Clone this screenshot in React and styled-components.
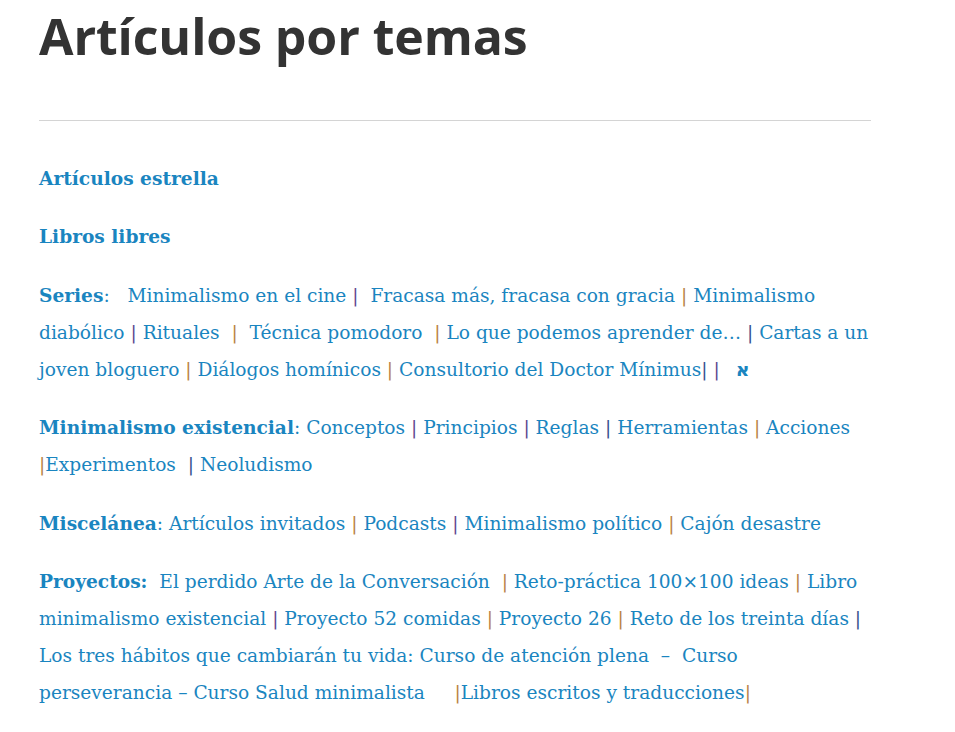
import React from 'react'
import styled, { createGlobalStyle } from 'styled-components'

const GlobalStyle = createGlobalStyle`
  body {
    margin: 0;
    background: #ffffff;
  }
`

const Page = styled.main`
  padding: 0 0 0 39px;
  width: 832px;
`

const Title = styled.h1`
  margin: 0;
  padding-top: 3px;
  font-family: "Open Sans", "Noto Sans", sans-serif;
  font-weight: 700;
  font-size: 50px;
  line-height: 66px;
  color: #333333;
  letter-spacing: -0.1px;
`

const Rule = styled.hr`
  margin: 51px 0 38.5px;
  border: 0;
  border-top: 1px solid #d4d4d4;
`

const Para = styled.p`
  margin: 0 0 21.5px;
  font-family: "DejaVu Serif", "Liberation Serif", serif;
  font-size: 18.6px;
  line-height: 37px;
  color: #1a85c0;
`

const Link = styled.a`
  color: #1a85c0;
  text-decoration: none;
  font-weight: ${p => (p.$strong ? 700 : 400)};
`

const Label = styled.strong`
  font-weight: 700;
`

const Pipe = styled.span`
  color: ${p => (p.$tone === 'warm' ? '#b98245' : p.$tone === 'dark' ? '#34508f' : '#5c4790')};
`

const Aleph = styled.a`
  color: #1a85c0;
  text-decoration: none;
  font-family: "DejaVu Sans", sans-serif;
  font-weight: 700;
  font-size: 19px;
  margin-left: 10px;
`

const S = '\u00a0'

export default function App() {
  return (
    <>
      <GlobalStyle />
      <Page>
        <Title>Artículos por temas</Title>
        <Rule />

        <Para><Link $strong href="#">Artículos estrella</Link></Para>
        <Para><Link $strong href="#">Libros libres</Link></Para>

        <Para>
          <Label>Series</Label>:{S}{S} <Link href="#">Minimalismo en el cine</Link> <Pipe>|</Pipe>{S} <Link href="#">Fracasa más, fracasa con gracia</Link> <Pipe $tone="warm">|</Pipe> <Link href="#">Minimalismo diabólico</Link> <Pipe>|</Pipe> <Link href="#">Rituales</Link>{S} <Pipe $tone="warm">|</Pipe>{S} <Link href="#">Técnica pomodoro</Link>{S} <Pipe $tone="warm">|</Pipe> <Link href="#">Lo que podemos aprender de…</Link> <Pipe $tone="dark">|</Pipe> <Link href="#">Cartas a un joven bloguero</Link> <Pipe $tone="warm">|</Pipe> <Link href="#">Diálogos homínicos</Link> <Pipe $tone="warm">|</Pipe> <Link href="#">Consultorio del Doctor Mínimus</Link><Pipe $tone="dark">|</Pipe> <Pipe>|</Pipe> <Aleph href="#">א</Aleph>
        </Para>

        <Para>
          <Label>Minimalismo existencial</Label>: <Link href="#">Conceptos</Link> <Pipe>|</Pipe> <Link href="#">Principios</Link> <Pipe>|</Pipe> <Link href="#">Reglas</Link> <Pipe $tone="dark">|</Pipe> <Link href="#">Herramientas</Link> <Pipe $tone="warm">|</Pipe> <Link href="#">Acciones</Link> <Pipe $tone="warm">|</Pipe><Link href="#">Experimentos</Link>{S} <Pipe $tone="dark">|</Pipe> <Link href="#">Neoludismo</Link>
        </Para>

        <Para>
          <Label>Miscelánea</Label>: <Link href="#">Artículos invitados</Link> <Pipe $tone="warm">|</Pipe> <Link href="#">Podcasts</Link> <Pipe>|</Pipe> <Link href="#">Minimalismo político</Link> <Pipe $tone="warm">|</Pipe> <Link href="#">Cajón desastre</Link>
        </Para>

        <Para>
          <Label>Proyectos:</Label>{S} <Link href="#">El perdido Arte de la Conversación</Link>{S} <Pipe $tone="warm">|</Pipe> <Link href="#">Reto-práctica 100×100 ideas</Link> <Pipe $tone="warm">|</Pipe> <Link href="#">Libro minimalismo existencial</Link> <Pipe>|</Pipe> <Link href="#">Proyecto 52 comidas</Link> <Pipe $tone="warm">|</Pipe> <Link href="#">Proyecto 26</Link> <Pipe $tone="warm">|</Pipe> <Link href="#">Reto de los treinta días</Link> <Pipe $tone="dark">|</Pipe> <Link href="#">Los tres hábitos que cambiarán tu vida: Curso de atención plena</Link>{S} –{S} <Link href="#">Curso perseverancia</Link> – <Link href="#">Curso Salud minimalista</Link>{S}{S}{S}{S} <Pipe $tone="warm">|</Pipe><Link href="#">Libros escritos y traducciones</Link><Pipe $tone="warm">|</Pipe>
        </Para>
      </Page>
    </>
  )
}
